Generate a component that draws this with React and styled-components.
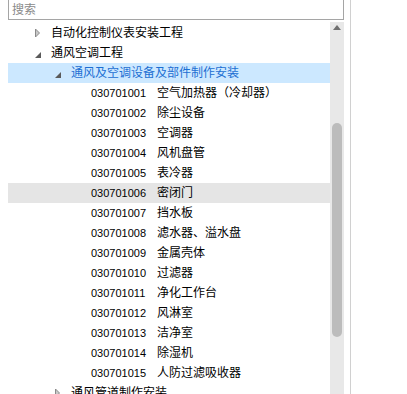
import React from "react";
import styled, { createGlobalStyle } from "styled-components";

const Global = createGlobalStyle`
  html, body { margin: 0; padding: 0; background: #fff; }
  body { font-family: "Liberation Sans", "Noto Sans CJK SC", sans-serif; font-size: 12px; color: #000; }
`;

const Page = styled.div`
  display: flex;
  width: 407px;
  height: 394px;
  overflow: hidden;
`;

const Panel = styled.div`
  width: 350px;
  flex: none;
  border-right: 1px solid #d0d0d0;
  padding-left: 8px;
  box-sizing: border-box;
  display: flex;
  flex-direction: column;
  width: 351px;
`;

const Search = styled.div`
  width: 336px;
  height: 20px;
  box-sizing: border-box;
  border: 1px solid #a5a5a5;
  border-top: none;
  display: flex;
  align-items: center;
  padding-left: 3px;
  color: #8a8a8a;
  font-size: 12px;
  line-height: 1;
`;

const Body = styled.div`
  display: flex;
  margin-top: 2px;
  flex: 1;
  min-height: 0;
`;

const List = styled.div`
  width: 322px;
  padding-top: 1px;
  overflow: hidden;
`;

const Row = styled.div`
  height: 20px;
  display: flex;
  align-items: center;
  padding-left: ${(p) => 27 + p.$level * 20}px;
  background: ${(p) => (p.$selected ? "#cce8ff" : p.$hover ? "#e5e5e5" : "transparent")};
  color: ${(p) => (p.$selected ? "#1c6fd3" : "#000")};
  white-space: nowrap;
`;

const Toggle = styled.span`
  width: 16px;
  height: 20px;
  flex: none;
  display: flex;
  align-items: center;
  justify-content: flex-start;
`;

const Label = styled.span`
  font-size: 12px;
  line-height: 20px;
`;

const Code = styled.span`
  width: 66px;
  flex: none;
  font-size: 11px;
  line-height: 20px;
`;

const Scroll = styled.div`
  width: 14px;
  flex: none;
  background: #e8e8e8;
  position: relative;
`;

const ArrowUp = styled.svg`
  position: absolute;
  left: 3px;
  top: 3px;
`;

const Thumb = styled.div`
  position: absolute;
  left: 2px;
  width: 10px;
  top: 101px;
  height: 214px;
  border-radius: 5px;
  background: #bcbcbc;
`;

const Collapsed = () => (
  <svg width="6" height="10" viewBox="0 0 6 10">
    <path d="M0.5 1 L0.5 9 L4.5 5 Z" fill="#c8c8c8" stroke="#8a8a8a" strokeWidth="1" />
  </svg>
);

const Expanded = () => (
  <svg width="7" height="12" viewBox="0 0 7 12">
    <path d="M6 5 L6 11 L0 11 Z" fill="#5a5a5a" />
  </svg>
);

const items = [
  ["030701001", "空气加热器（冷却器）"],
  ["030701002", "除尘设备"],
  ["030701003", "空调器"],
  ["030701004", "风机盘管"],
  ["030701005", "表冷器"],
  ["030701006", "密闭门"],
  ["030701007", "挡水板"],
  ["030701008", "滤水器、溢水盘"],
  ["030701009", "金属壳体"],
  ["030701010", "过滤器"],
  ["030701011", "净化工作台"],
  ["030701012", "风淋室"],
  ["030701013", "洁净室"],
  ["030701014", "除湿机"],
  ["030701015", "人防过滤吸收器"],
];

export default function App() {
  return (
    <>
      <Global />
      <Page>
        <Panel>
          <Search>搜索</Search>
          <Body>
            <List>
              <Row $level={0}>
                <Toggle><Collapsed /></Toggle>
                <Label>自动化控制仪表安装工程</Label>
              </Row>
              <Row $level={0}>
                <Toggle><Expanded /></Toggle>
                <Label>通风空调工程</Label>
              </Row>
              <Row $level={1} $selected>
                <Toggle><Expanded /></Toggle>
                <Label>通风及空调设备及部件制作安装</Label>
              </Row>
              {items.map(([code, name]) => (
                <Row key={code} $level={2} $hover={code === "030701006"}>
                  <Toggle />
                  <Code>{code}</Code>
                  <Label>{name}</Label>
                </Row>
              ))}
              <Row $level={1}>
                <Toggle><Collapsed /></Toggle>
                <Label>通风管道制作安装</Label>
              </Row>
            </List>
            <Scroll>
              <ArrowUp width="8" height="5" viewBox="0 0 8 5">
                <path d="M4 0 L8 5 L0 5 Z" fill="#707070" />
              </ArrowUp>
              <Thumb />
            </Scroll>
          </Body>
        </Panel>
      </Page>
    </>
  );
}
